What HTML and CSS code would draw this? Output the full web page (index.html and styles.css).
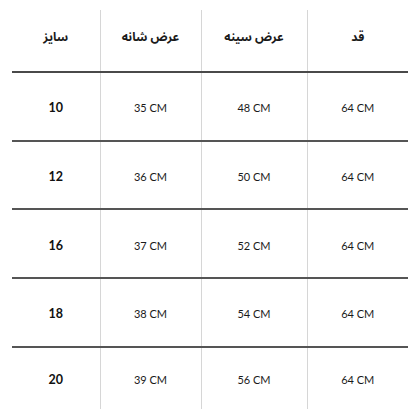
FILE: index.html
```html
<!DOCTYPE html>
<html lang="fa" dir="rtl">
<head>
<meta charset="utf-8">
<link rel="stylesheet" href="styles.css">
</head>
<body>
<div class="wrap">
<table class="sizes">
  <colgroup>
    <col class="c-height"><col class="c-chest"><col class="c-shoulder"><col class="c-size">
  </colgroup>
  <thead>
    <tr><th>قد</th><th>عرض سینه</th><th>عرض شانه</th><th>سایز</th></tr>
  </thead>
  <tbody>
    <tr><td>64 CM</td><td>48 CM</td><td>35 CM</td><td class="num">10</td></tr>
    <tr><td>64 CM</td><td>50 CM</td><td>36 CM</td><td class="num">12</td></tr>
    <tr><td>64 CM</td><td>52 CM</td><td>37 CM</td><td class="num">16</td></tr>
    <tr><td>64 CM</td><td>54 CM</td><td>38 CM</td><td class="num">18</td></tr>
    <tr><td>64 CM</td><td>56 CM</td><td>39 CM</td><td class="num">20</td></tr>
  </tbody>
</table>
</div>
</body>
</html>
```

FILE: styles.css
```css
html, body {
  margin: 0;
  padding: 0;
  background: #ffffff;
}
.wrap {
  padding: 10px 12px 0 12px;
}
.sizes {
  width: 396px;
  border-collapse: collapse;
  table-layout: fixed;
  font-family: Lato, "DejaVu Sans", sans-serif;
  color: #1a1a1a;
}
.c-height { width: 101px; }
.c-chest { width: 106px; }
.c-shoulder { width: 101px; }
.c-size { width: 88px; }
.sizes th, .sizes td {
  padding: 0;
  text-align: center;
  vertical-align: middle;
  border-left: 1px solid #d6d6d6;
}
.sizes th:last-child, .sizes td:last-child {
  border-left: none;
}
.sizes th {
  height: 55px;
  font-family: "Noto Sans Arabic", "Noto Naskh Arabic", "DejaVu Sans", sans-serif;
  font-size: 12px;
  font-weight: bold;
  border-bottom: 2px solid #4a4a4a;
  padding-bottom: 6px;
}
.sizes td {
  height: 63.7px;
  padding-top: 3px;
  font-size: 11px;
  direction: ltr;
  border-bottom: 2px solid #555555;
}
.sizes tbody tr:last-child td {
  border-bottom: none;
  height: 58px;
}
.sizes td.num {
  font-weight: bold;
  font-size: 12.5px;
  color: #111;
}
```
